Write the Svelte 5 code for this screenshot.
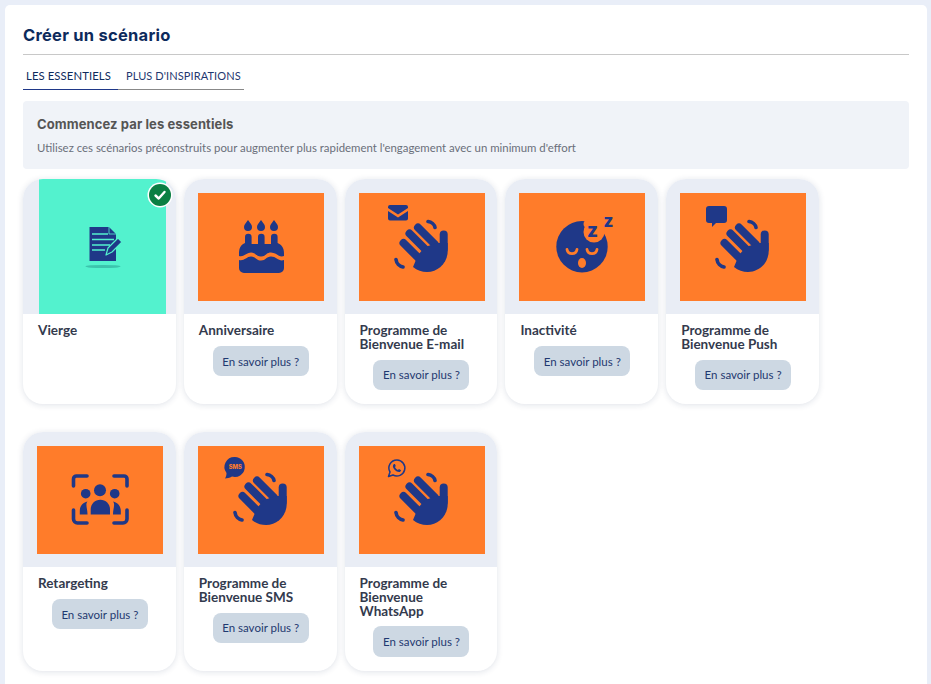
<script>
  // scénarios proposés dans l'onglet "les essentiels"
  const scenarios = [
    { id: "vierge", titre: "Vierge", icone: "doc" },
    { id: "anniv", titre: "Anniversaire", icone: "gateau", plus: true },
    { id: "email", titre: "Programme de Bienvenue E-mail", icone: "email", plus: true },
    { id: "inactif", titre: "Inactivité", icone: "dodo", plus: true },
    { id: "push", titre: "Programme de Bienvenue Push", icone: "push", plus: true },
    { id: "retarget", titre: "Retargeting", icone: "groupe", plus: true },
    { id: "sms", titre: "Programme de Bienvenue SMS", icone: "sms", plus: true },
    { id: "whatsapp", titre: "Programme de Bienvenue WhatsApp", icone: "whatsapp", plus: true }
  ];
</script>

{#snippet main()}
  <path class="trait" d="M59 34.500 76 51.500M50.500 40.500 70 60M44.500 50 64 69.500" stroke-width="8" />
  <path class="trait" d="M84.7 41.5V56" stroke-width="8" />
  <path class="plein" d="M78 50 66 54 59 62 54 74C58 77.5 63 79 68 79 79 79 88.7 70 88.7 58V50Z" />
  <path class="trait" d="M69 28.5C72.500 29 75.500 31.500 76 34.500M37 66.500C37.500 70.500 40.500 73.500 44 74" stroke-width="3.6" />
{/snippet}

<div class="page">
  <section class="panneau">
    <h1>Créer un scénario</h1>

    <div class="onglets">
      <button class="onglet actif">LES ESSENTIELS</button>
      <button class="onglet">PLUS D'INSPIRATIONS</button>
    </div>

    <div class="intro">
      <h2>Commencez par les essentiels</h2>
      <p>Utilisez ces scénarios préconstruits pour augmenter plus rapidement l'engagement avec un minimum d'effort</p>
    </div>

    <div class="grille">
      {#each scenarios as s}
        <article class="carte">
          <div class="entete" class:vierge={s.icone === "doc"}>
            <svg class="visuel" viewBox={s.icone === "doc" ? "0 0 127 135" : "0 0 126 108"}>
              {#if s.icone === "doc"}
                <ellipse cx="64" cy="87.5" rx="17.5" ry="1.6" fill="#3cc4ad" />
                <path class="plein" d="M50.5 48H70L77 55V82H50.5Z" />
                <path d="M70 48V55H77" fill="none" stroke="#53f2ce" stroke-width="0.8" />
                <path d="M53 55H69M53 60.5H75M53 66H71M53 71H66" stroke="#53f2ce" stroke-width="1.3" fill="none" />
                <path d="M67 76 69 69 79 59 83 63 73 73Z" fill="#1f3888" stroke="#53f2ce" stroke-width="1.2" stroke-linejoin="round" />
              {:else if s.icone === "gateau"}
                <path class="plein" d="M50 27C48 30 46 31.500 46 34a4 4 0 0 0 8 0C54 31.500 52 30 50 27ZM63 27C61 30 59 31.500 59 34a4 4 0 0 0 8 0C67 31.500 65 30 63 27ZM76 27C74 30 72 31.500 72 34a4 4 0 0 0 8 0C80 31.500 78 30 76 27Z" />
                <path class="plein" d="M47 44a3.3 3.3 0 0 1 6.6 0V51H60V44a3.3 3.3 0 0 1 6.6 0V51H73V44a3.3 3.3 0 0 1 6.6 0V50C83.500 51.500 86 55 86 60V63C81 65 78.500 59.500 73 59.500 68 59.500 68 63.500 63 63.500 58 63.500 58 59.500 53 59.500 48 59.500 46 64.500 41 63V60C41 55 43 51.500 47 50Z" />
                <path class="plein" d="M41 67C46 68.500 48.500 63.500 53 63.500 58 63.500 58 67.500 63 67.500 68 67.500 68 63.500 73 63.500 78.500 63.500 81 69 86 67V75a5 5 0 0 1-5 5H46a5 5 0 0 1-5-5Z" />
              {:else if s.icone === "email"}
                {@render main()}
                <path class="plein" d="M29 14a2 2 0 0 1 2-2H47a2 2 0 0 1 2 2V15L39 21.500 29 15ZM29 18 39 24.500 49 18V25.500a2 2 0 0 1-2 2H31a2 2 0 0 1-2-2Z" />
              {:else if s.icone === "dodo"}
                <circle class="plein" cx="63" cy="53.7" r="25.7" />
                <circle cx="75" cy="39" r="10.5" fill="#ff7c2a" />
                <circle cx="69" cy="31" r="4.5" fill="#ff7c2a" />
                <text class="zed" x="68" y="44" font-size="19">z</text>
                <text class="zed" x="84.5" y="34" font-size="17">z</text>
                <path d="M48 56.5C49 62 57 62 58 56.5M68 56.5C69 62 77 62 78 56.5" fill="none" stroke="#ff7c2a" stroke-width="2.8" stroke-linecap="round" />
                <ellipse cx="63" cy="70" rx="4" ry="5" fill="#ff7c2a" />
              {:else if s.icone === "push"}
                {@render main()}
                <path class="plein" d="M29 13H44a3 3 0 0 1 3 3V27a3 3 0 0 1-3 3H36L32 34V30H29a3 3 0 0 1-3-3V16a3 3 0 0 1 3-3Z" />
              {:else if s.icone === "groupe"}
                <path class="trait" d="M36.5 40V33a3 3 0 0 1 3-3H50M77 30H87a3 3 0 0 1 3 3V40M36.5 64V73a4 4 0 0 0 4 4H50M77 77H86a4 4 0 0 0 4-4V64" fill="none" stroke-width="3.6" />
                <circle class="plein" cx="63" cy="44.3" r="6" />
                <circle class="plein" cx="48.7" cy="47.7" r="4.8" />
                <circle class="plein" cx="77.7" cy="47.7" r="4.8" />
                <path class="plein" d="M53.7 68.500V63C53.7 58 58 53.7 63.3 53.7 68.7 53.7 73 58 73 63V68.500Z" />
                <path class="plein" d="M42.8 68.500V65C42.8 60 45.500 56.8 50.500 55.500 48 58.500 50.500 62 50.500 68.500ZM83.8 68.500V65C83.8 60 81 56.8 76 55.500 78.500 58.500 76 62 76 68.500Z" />
              {:else if s.icone === "sms"}
                {@render main()}
                <path class="plein" d="M37 11a10 10 0 1 1-3 19.6C31.500 32 29 32.500 27 32.500 28 31 28.500 29 28.500 27A10 10 0 0 1 37 11Z" />
                <text class="sms" x="37.3" y="23.4" font-size="5.8" text-anchor="middle">SMS</text>
              {:else if s.icone === "whatsapp"}
                {@render main()}
                <path d="M38 14a8 8 0 1 1-4 15L29.500 30.500 31 26A8 8 0 0 1 38 14Z" fill="none" stroke="#1f3888" stroke-width="1.5" stroke-linejoin="round" />
                <path class="plein" d="M35 18C33.500 19 33.500 21 35 23 36.500 25 39 26.500 41 26L42.2 24.3 39.9 23 39 24C37.7 23.500 36.500 22.2 36 21L36.8 20 35.9 18Z" />
              {/if}
            </svg>
            {#if s.icone === "doc"}
              <span class="coche">
                <svg viewBox="0 0 22 22"><path d="M6.500 11.500 9.700 14.500 15.500 8" fill="none" stroke="#fff" stroke-width="2.4" stroke-linecap="round" stroke-linejoin="round" /></svg>
              </span>
            {/if}
          </div>
          <div class="corps">
            <h3>{s.titre}</h3>
            {#if s.plus}
              <button class="plus">En savoir plus ?</button>
            {/if}
          </div>
        </article>
      {/each}
    </div>
  </section>
</div>

<style>
  :global(body) {
    margin: 0;
    background: #e9eef8;
  }

  .page {
    padding: 5px 4px 0 5px;
    height: 679px;
    overflow: hidden;
    font-family: "Lato", "Open Sans", sans-serif;
  }

  .panneau {
    background: #fff;
    border-radius: 5px 5px 0 0;
    padding: 18px 18px 40px;
    min-height: 700px;
    box-sizing: border-box;
  }

  h1 {
    margin: 0;
    font-family: "Inter", sans-serif;
    font-size: 16.5px;
    letter-spacing: 0.25px;
    line-height: 24px;
    font-weight: 700;
    color: #0d2a5c;
    padding-bottom: 7px;
    border-bottom: 1px solid #c8c8c8;
  }

  .onglets {
    display: flex;
    margin-top: 10px;
  }

  .onglet {
    border: 0;
    background: none;
    font-family: inherit;
    font-size: 11px;
    line-height: 14px;
    color: #1f3870;
    padding: 4px 3px 6px 8px;
    border-bottom: 1px solid #888;
    letter-spacing: 0.1px;
  }

  .onglet.actif {
    padding: 4px 7px 6px 3px;
    font-size: 11.3px;
    border-bottom-color: #1f3888;
    color: #0d2a5c;
  }

  .intro {
    margin-top: 11px;
    background: #f0f3f8;
    border-radius: 4px;
    padding: 14px 14px 13px;
    height: 41px;
  }

  .intro h2 {
    margin: 0;
    font-family: "Inter", sans-serif;
    font-size: 13px;
    letter-spacing: 0.1px;
    line-height: 18px;
    font-weight: 700;
    color: #555;
  }

  .intro p {
    margin: 8px 0 0;
    font-size: 11.4px;
    line-height: 14px;
    color: #6a6f7a;
  }

  .grille {
    display: flex;
    flex-wrap: wrap;
    margin-top: 10px;
  }

  .carte {
    position: relative;
    width: 152.8px;
    margin: 0 8px 28px 0;
    background: #fff;
    border-radius: 20px;
    overflow: hidden;
    box-shadow: 0 1px 6px rgba(30, 50, 90, 0.14);
  }

  .entete {
    height: 135px;
    background: #e9edf5;
    padding: 14px 14px 13px;
    box-sizing: border-box;
  }

  .entete.vierge {
    padding: 0 9px 0 16px;
  }

  .visuel {
    display: block;
    width: 126px;
    height: 108px;
    background: #ff7c2a;
  }

  .vierge .visuel {
    width: 127px;
    height: 135px;
    background: #53f2ce;
  }

  .coche {
    position: absolute;
    top: 5px;
    right: 5px;
    width: 22px;
    height: 22px;
    border-radius: 50%;
    background: #0a7f43;
    box-shadow: 0 0 0 1.5px #fff;
  }

  .coche svg {
    display: block;
    width: 22px;
    height: 22px;
  }

  .corps {
    padding: 10px 14px 14px 15px;
  }

  h3 {
    margin: 0;
    font-size: 13.5px;
    line-height: 13.8px;
    font-weight: 700;
    color: #333a4d;
  }

  .plus {
    display: block;
    margin: 8px auto 0;
    width: 96px;
    height: 30.5px;
    padding: 0;
    border: 0;
    border-radius: 8px;
    background: #cdd8e3;
    font-family: inherit;
    font-size: 11.5px;
    color: #1f3870;
  }

  .plein {
    fill: #1f3888;
  }

  .trait {
    fill: none;
    stroke: #1f3888;
    stroke-linecap: round;
  }

  .zed {
    font-family: "Inter", sans-serif;
    font-weight: 800;
    fill: #1f3888;
  }

  .sms {
    font-family: "Inter", sans-serif;
    font-weight: 800;
    fill: #ff7c2a;
  }
</style>
